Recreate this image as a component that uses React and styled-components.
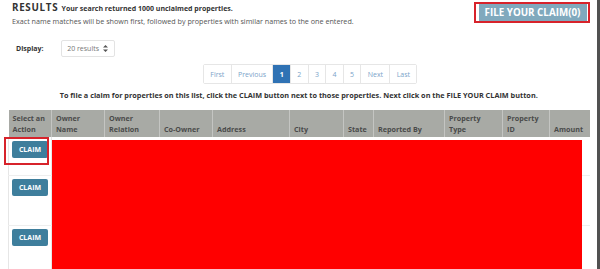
import styled, { createGlobalStyle } from "styled-components";

const GlobalStyle = createGlobalStyle`
  html, body {
    margin: 0;
    padding: 0;
    background: #fff;
    overflow: hidden;
  }
  body {
    font-family: "Open Sans", "Liberation Sans", sans-serif;
    color: #333;
  }
`;

const columns = [
  { label: "Select an Action", width: 43 },
  { label: "Owner Name", width: 53 },
  { label: "Owner Relation", width: 55 },
  { label: "Co-Owner", width: 53 },
  { label: "Address", width: 77 },
  { label: "City", width: 54 },
  { label: "State", width: 30 },
  { label: "Reported By", width: 71 },
  { label: "Property Type", width: 58 },
  { label: "Property ID", width: 47 },
  { label: "Amount", width: 40 },
];

const rows = [38, 50, 50];
const pages = ["First", "Previous", "1", "2", "3", "4", "5", "Next", "Last"];

function App() {
  return (
    <Frame>
      <GlobalStyle />
      <Main>
        <Header>
          <TitleBlock>
            <Title>
              RESULTS <Summary>Your search returned 1000 unclaimed properties.</Summary>
            </Title>
            <Note>
              Exact name matches will be shown first, followed by properties with similar names to the one entered.
            </Note>
          </TitleBlock>
          <Outline>
            <FileButton>FILE YOUR CLAIM(0)</FileButton>
          </Outline>
        </Header>

        <DisplayRow>
          <DisplayLabel>Display:</DisplayLabel>
          <Select>
            20 results
            <svg width="5" height="7" viewBox="0 0 5 7">
              <path d="M2.5 0 L5 2.6 H0 Z M2.5 7 L5 4.4 H0 Z" fill="#555" />
            </svg>
          </Select>
        </DisplayRow>

        <Pager>
          {pages.map((p) => (
            <PageItem key={p} $active={p === "1"}>
              {p}
            </PageItem>
          ))}
        </Pager>

        <Instruction>
          To file a claim for properties on this list, click the CLAIM button next to those properties. Next click on the FILE YOUR CLAIM button.
        </Instruction>

        <TableWrap>
          <Table>
            <colgroup>
              {columns.map((c) => (
                <col key={c.label} style={{ width: c.width }} />
              ))}
            </colgroup>
            <thead>
              <tr>
                {columns.map((c) => (
                  <Th key={c.label}>{c.label}</Th>
                ))}
              </tr>
            </thead>
            <tbody>
              {rows.map((h, i) => (
                <tr key={i} style={{ height: h }}>
                  <Td $first $pad={i === 0 ? 4 : 3}>
                    <ClaimButton>CLAIM</ClaimButton>
                  </Td>
                  {columns.slice(1).map((c) => (
                    <Td key={c.label} />
                  ))}
                </tr>
              ))}
            </tbody>
          </Table>
          <Redaction />
          <Highlight />
        </TableWrap>
      </Main>
      <EdgeBar />
    </Frame>
  );
}

const Frame = styled.div`
  display: flex;
  width: 600px;
  height: 269px;
  overflow: hidden;
`;

const Main = styled.div`
  flex: 1;
  padding: 2px 7px 0 8px;
  display: flex;
  flex-direction: column;
`;

const EdgeBar = styled.div`
  width: 4px;
  background: #515151;
`;

const Header = styled.div`
  display: flex;
  justify-content: space-between;
  align-items: flex-start;
`;

const TitleBlock = styled.div`
  display: flex;
  flex-direction: column;
  padding-left: 4px;
`;

const Title = styled.div`
  font-size: 9.8px;
  font-weight: 700;
  letter-spacing: 0.7px;
  line-height: 11px;
  color: #333;
`;

const Summary = styled.span`
  font-size: 7px;
  letter-spacing: 0;
`;

const Note = styled.div`
  font-size: 7.2px;
  line-height: 10px;
  margin-top: 2px;
  color: #555;
`;

const Outline = styled.div`
  border: 2px solid #d7232b;
  padding: 0 1px 0 3px;
  background: #fff;
`;

const FileButton = styled.button`
  height: 17px;
  width: 108px;
  border: none;
  background: #80a9bd;
  color: #fff;
  font-family: inherit;
  font-size: 9.8px;
  font-weight: 700;
  padding: 0;
  display: block;
`;

const DisplayRow = styled.div`
  display: flex;
  align-items: center;
  margin-top: 14px;
  padding-left: 8px;
  gap: 17px;
`;

const DisplayLabel = styled.span`
  font-size: 7px;
  font-weight: 700;
  color: #333;
`;

const Select = styled.div`
  width: 54px;
  height: 17px;
  box-sizing: border-box;
  border: 1px solid #e3e3e3;
  border-radius: 2px;
  display: flex;
  align-items: center;
  justify-content: center;
  gap: 4px;
  font-size: 7px;
  color: #777;
`;

const Pager = styled.div`
  display: flex;
  margin: 7px 0 0 195px;
  align-self: flex-start;
  border: 1px solid #e6e6e6;
  border-radius: 2px;
`;

const PageItem = styled.span`
  height: 18px;
  padding: 0 6.3px;
  display: flex;
  align-items: center;
  font-size: 7px;
  color: ${(p) => (p.$active ? "#fff" : "#7ba3c9")};
  background: ${(p) => (p.$active ? "#2f72b4" : "#fff")};
  font-weight: ${(p) => (p.$active ? 700 : 400)};
  border-left: 1px solid #e6e6e6;
  &:first-child {
    border-left: none;
  }
`;

const Instruction = styled.div`
  text-align: center;
  font-size: 7.3px;
  font-weight: 700;
  color: #333;
  margin-top: 6px;
  line-height: 10px;
`;

const TableWrap = styled.div`
  position: relative;
  margin-top: 10px;
`;

const Table = styled.table`
  width: 581px;
  border-collapse: collapse;
  table-layout: fixed;
`;

const Th = styled.th`
  background: #a8aaa5;
  color: #4a4a4a;
  font-size: 7.2px;
  font-weight: 700;
  text-align: left;
  vertical-align: bottom;
  line-height: 10.5px;
  padding: 2px 4px 3px;
  height: 22px;
  border-left: 1px solid #c4c5c2;
  &:first-child {
    border-left: none;
  }
`;

const Td = styled.td`
  vertical-align: top;
  padding: ${(p) => (p.$pad ? `${p.$pad}px 0 0 3px` : "0")};
  border-bottom: 1px solid #eeeeee;
  border-left: ${(p) => (p.$first ? "1px solid #e6e6e6" : "none")};
  border-right: ${(p) => (p.$first ? "1px solid #e6e6e6" : "none")};
`;

const ClaimButton = styled.button`
  width: 36px;
  height: 17px;
  padding: 0;
  border: none;
  border-radius: 2px;
  background: #3e7e9c;
  color: #fff;
  font-family: inherit;
  font-size: 7px;
  font-weight: 700;
  display: block;
`;

const Redaction = styled.div`
  position: absolute;
  left: 44px;
  right: 8px;
  top: 30px;
  bottom: -20px;
  background: #ff0000;
`;

const Highlight = styled.div`
  position: absolute;
  left: -4px;
  top: 27px;
  width: 41px;
  height: 24px;
  border: 2px solid #d7232b;
`;

export default App;
